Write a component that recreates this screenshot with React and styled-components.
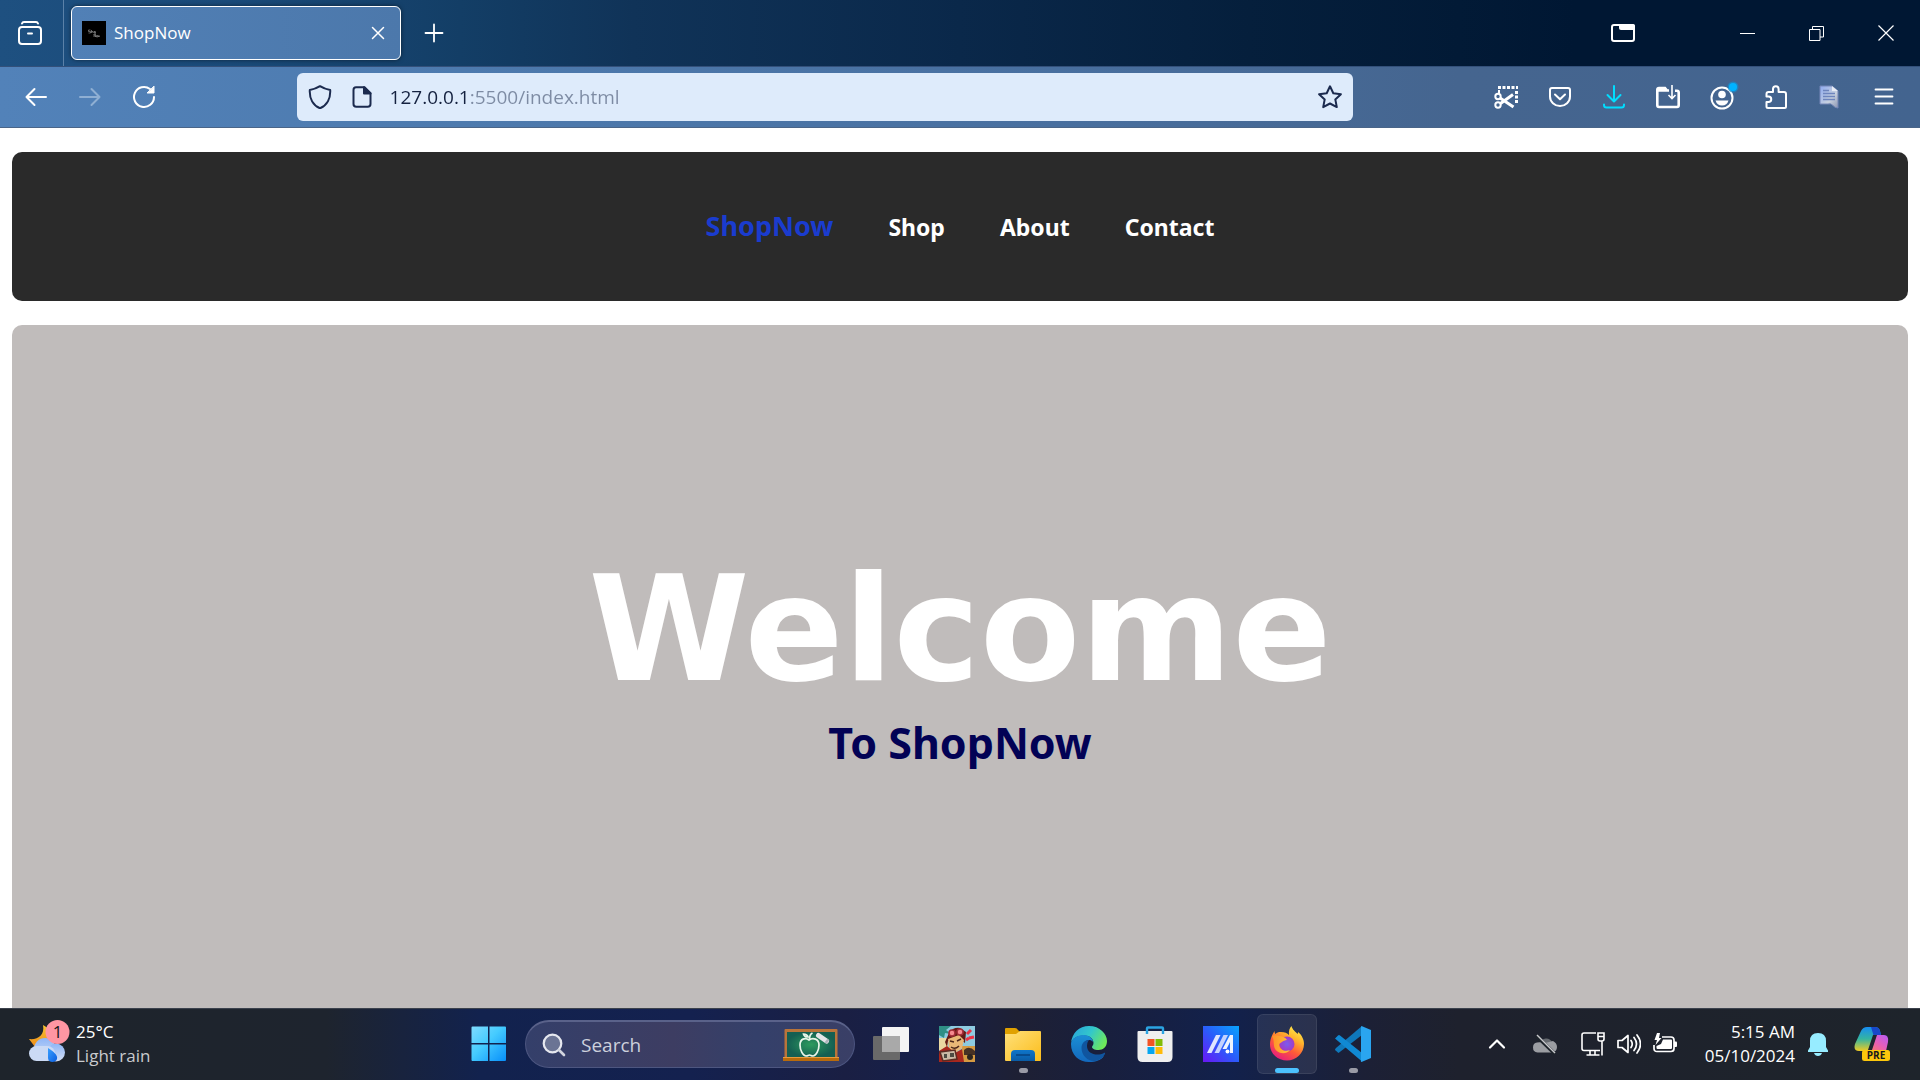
import React, { useState } from "react";
import styled, { createGlobalStyle } from "styled-components";

const UI = `"Open Sans", "Noto Sans", sans-serif`;
const SITE = `"Noto Sans", "Open Sans", sans-serif`;

const GlobalStyle = createGlobalStyle`
  *, *::before, *::after { box-sizing: border-box; }
  html, body { margin: 0; padding: 0; overflow: hidden; background: #fff; }
  svg { display: block; flex: none; }
  button { border: 0; padding: 0; margin: 0; background: none; color: inherit; font: inherit; cursor: pointer; }
  input { border: 0; padding: 0; margin: 0; outline: 0; background: none; font: inherit; }
`;

const Desktop = styled.div`
  height: 100vh;
  display: flex;
  flex-direction: column;
  font-family: ${UI};
  color: #fff;
`;

/* ---------- browser chrome ---------- */

const TabStrip = styled.header`
  flex: none;
  height: 67px;
  display: flex;
  align-items: center;
  border-bottom: 1px solid #33507a;
  background: linear-gradient(90deg, #1e5080 0%, #1a4a79 12%, #133e66 24%, #103358 33%, #0a284a 50%, #051f3c 65%, #021a36 76%, #001733 82%);
`;

const IconButton = styled.button`
  width: ${(p) => p.$width || 54}px;
  height: ${(p) => p.$height || 48}px;
  display: flex;
  align-items: center;
  justify-content: center;
  color: ${(p) => p.$color || "inherit"};
  flex: none;
`;

const OverviewCell = styled.div`
  align-self: stretch;
  width: 64px;
  display: flex;
  align-items: center;
  padding-left: 3px;
  border-right: 1px solid #5b81a8;
  margin-right: 7px;
`;

const Tab = styled.div`
  width: 330px;
  height: 54px;
  display: flex;
  align-items: center;
  padding: 0 6px 0 10px;
  border: 1px solid #fff;
  border-radius: 6px;
  background: linear-gradient(90deg, #5180b6, #4c78ab);
  box-shadow: 0 0 4px rgba(0, 0, 0, 0.5);
`;

const TabTitle = styled.span`
  flex: 1;
  margin-left: 8px;
  font-size: 17px;
  line-height: 24px;
`;

const Spacer = styled.div`
  flex: 1;
`;

const WindowControls = styled.div`
  display: flex;
  margin-left: 56px;
`;

const Toolbar = styled.div`
  flex: none;
  height: 61px;
  display: flex;
  align-items: center;
  padding: 0 9px;
  border-bottom: 1px solid #4a6588;
  background: linear-gradient(90deg, #5282b9 0%, #4d7aae 24%, #486f9f 55%, #45658f 76%, #43648f 100%);
`;

const ToolGroup = styled.div`
  display: flex;
`;

const UrlBar = styled.div`
  flex: 8.4 1 0;
  height: 48px;
  display: flex;
  align-items: center;
  padding: 0 0 0 2px;
  border-radius: 6px;
  background: #deebfb;
  color: #1b2a4e;
`;

const UrlInput = styled.input`
  flex: 1;
  min-width: 0;
  height: 32px;
  margin-left: 7px;
  font-size: 19px;
  line-height: 32px;
  color: #14213f;
  background: linear-gradient(90deg, #14213f 77px, #7d8ba3 77px);
  -webkit-background-clip: text;
  background-clip: text;
  -webkit-text-fill-color: transparent;
  caret-color: #14213f;
`;

/* ---------- page ---------- */

const Page = styled.main`
  flex: 1;
  min-height: 0;
  overflow: hidden;
  padding: 24px 12px 0;
  background: #fff;
  font-family: ${SITE};
`;

const Nav = styled.nav`
  display: flex;
  justify-content: center;
  align-items: baseline;
  gap: 55px;
  padding: 54px 24px;
  border-radius: 10px;
  background: #2a2a2a;
`;

const NavLink = styled.a`
  font-size: ${(p) => (p.$brand ? 27 : 23)}px;
  line-height: 40px;
  font-weight: 700;
  text-decoration: none;
  color: ${(p) => (p.$brand ? "#1a3ccf" : "#fff")};
`;

const Hero = styled.section`
  height: 80vh;
  margin-top: 24px;
  padding-top: 220px;
  border-radius: 10px;
  background: #c0bcbb;
  text-align: center;
`;

const HeroTitle = styled.h1`
  margin: 0;
  font-family: "DejaVu Sans", sans-serif;
  font-size: 146px;
  line-height: 168px;
  font-weight: 700;
  color: #fff;
`;

const HeroSubtitle = styled.h2`
  margin: 0;
  font-size: 43px;
  line-height: 60px;
  font-weight: 700;
  color: #020255;
`;

/* ---------- taskbar ---------- */

const Taskbar = styled.footer`
  flex: none;
  height: 72px;
  display: grid;
  grid-template-columns: 459fr auto 537fr;
  align-items: center;
  padding-bottom: 1px;
  border-top: 1px solid #3b414c;
  background: linear-gradient(90deg, #1e242b 0%, #1e242e 17%, #12224e 25%, #14214f 36%, #1a1f43 44%, #16204a 48%, #1e2034 53%, #191f3c 57%, #12214c 64%, #1c2036 71%, #1e212d 76%, #1e242b 100%);
`;

const Weather = styled.button`
  justify-self: start;
  display: flex;
  align-items: center;
  gap: 6px;
  margin-left: 28px;
  text-align: left;
`;

const TextLine = styled.span`
  display: block;
  font-size: 17px;
  line-height: 24px;
  color: ${(p) => (p.$muted ? "#c9cbce" : "#fff")};
`;

const Apps = styled.div`
  display: flex;
  align-items: center;
  gap: 6px;
`;

const AppButton = styled.button`
  width: 60px;
  height: 60px;
  display: flex;
  flex-direction: column;
  align-items: center;
  justify-content: space-between;
  padding: 12px 0 1px;
  border-radius: 6px;
  background: ${(p) => (p.$active ? "rgba(255,255,255,0.08)" : "none")};
  box-shadow: ${(p) => (p.$active ? "inset 0 0 0 1px rgba(255,255,255,0.08)" : "none")};
`;

const Indicator = styled.span`
  height: 5px;
  width: ${(p) => (p.$state === "active" ? 24 : 9)}px;
  border-radius: 3px;
  background: ${(p) => ({ active: "#4cc2ff", open: "#9a9ba6" })[p.$state] || "transparent"};
`;

const SearchBox = styled.label`
  width: 330px;
  height: 48px;
  display: flex;
  align-items: center;
  padding: 0 15px 0 16px;
  border-radius: 24px;
  border: 1px solid #4d5680;
  border-top: 2px solid #5a628a;
  background: linear-gradient(90deg, #343f6a, #3d3d62 45%, #34406a 70%, #3a3f66);
`;

const SearchInput = styled.input`
  flex: 1;
  min-width: 0;
  margin-left: 15px;
  font-size: 19px;
  line-height: 28px;
  color: #fff;
  &::placeholder { color: #ccd0dc; opacity: 1; }
`;

const Tray = styled.div`
  justify-self: end;
  display: flex;
  align-items: center;
  padding-right: 12px;
`;

const Clock = styled.button`
  text-align: right;
  margin: 0 5px 0 16px;
`;

/* ---------- icons ---------- */

const Line = ({ size = 24, w = 2, children, ...rest }) => (
  <svg width={size} height={size} viewBox="0 0 24 24" fill="none" stroke="currentColor" strokeWidth={w} strokeLinecap="round" strokeLinejoin="round" {...rest}>
    {children}
  </svg>
);

const OverviewIcon = () => (
  <Line><path d="M4 2.500C4.400 1.300 5 1 6 1h12c1 0 1.600.3 2 1.500" /><rect x="1" y="6" width="22" height="17" rx="3" /><path d="M10 12.500h4" /></Line>
);
const Favicon = () => (
  <svg width="24" height="24" viewBox="0 0 24 24"><rect width="24" height="24" fill="#000" />
    <g stroke="#8d8d8d" strokeWidth=".7" fill="none"><path d="M8.500 9h-2v1.500h2V12h-2M9.500 9v3M9.500 10.500h1.500V12M12 10.500h1.200V12H12zM13.200 13v-2.500" /><path d="M12 16v-3l1.500 3v-3M14.500 14.500h1.200V16h-1.200zM16 14.500l.5 1.500.5-1.500.5 1.500" /></g>
  </svg>
);
const CloseIcon = ({ w = 1.5, size = 24 }) => <Line size={size} w={w}><path d="M6.500 6.500l11 11M17.500 6.500l-11 11" /></Line>;
const PlusIcon = () => <Line w={1.8}><path d="M12 3.500v17M3.500 12h17" /></Line>;
const FolderTabIcon = () => (
  <svg width="24" height="24" viewBox="0 0 24 24"><rect x="1" y="4" width="22" height="16" rx="2" fill="none" stroke="#fff" strokeWidth="2" /><path d="M8 3h14q2 0 2 2v4H10q-2 0-2-2z" fill="#fff" /></svg>
);
const MinimizeIcon = () => <svg width="15" height="15" viewBox="0 0 15 15"><path d="M0 7.500h15" stroke="#fff" /></svg>;
const RestoreIcon = () => <svg width="15" height="15" viewBox="0 0 15 15" fill="none" stroke="#fff"><path d="M.5 3.500h10.500v11H.5zM3.500 3.500v-3h11v10.500H11" /></svg>;
const WinCloseIcon = () => <svg width="16" height="16" viewBox="0 0 16 16" stroke="#fff" strokeWidth="1.200"><path d="M.5.5l15 15M15.500.5l-15 15" /></svg>;
const BackIcon = () => <Line><path d="M22 12H2.500M10.500 4l-8 8 8 8" /></Line>;
const ForwardIcon = () => <Line><path d="M2 12h19.500M13.500 4l8 8-8 8" /></Line>;
const ReloadIcon = () => (
  <Line><path d="M22 12A10 10 0 1 1 18 4" /><path d="M22 1.500V8h-6.500z" fill="currentColor" strokeWidth="1" /></Line>
);
const ShieldIcon = () => <Line><path d="M12 1.200c3.600 2.300 6.400 3.200 10.200 3.800.5 8.500-3.200 15.500-10.200 18.300C5 20.500 1.300 13.500 1.800 5 5.600 4.400 8.400 3.500 12 1.200z" /></Line>;
const PageIcon = () => (
  <Line><path d="M6 2.200h8.500l6 6V19q0 2.800-2.800 2.800H6.300Q3.500 21.800 3.500 19V4.900Q3.500 2.200 6 2.200z" /><path d="M14 2.200v6.300h6.500z" fill="currentColor" /></Line>
);
const StarIcon = () => <Line><path d="M12 1.300l3.300 6.900 7.600 1-5.600 5.200 1.500 7.700L12 18.500l-6.800 3.600 1.500-7.700L1.100 9.200l7.600-1z" /></Line>;
const ScissorsIcon = () => (
  <svg width="24" height="24" viewBox="0 0 24 24" fill="none" stroke="#fff">
    <path d="M4 2.500h20M22.500 6v13" strokeWidth="3" strokeDasharray="3 1.500" /><path d="M5 5v4" strokeWidth="2" />
    <circle cx="4" cy="11.500" r="2.700" strokeWidth="2" /><circle cx="4" cy="20" r="2.700" strokeWidth="2" />
    <path d="M6 13l13.500 9M6.500 18.500L19 9.500" strokeWidth="3" />
  </svg>
);
const PocketIcon = () => <Line><path d="M4 3h16q2 0 2 2v6.500a10 9.500 0 0 1-20 0V5q0-2 2-2z" /><path d="M7 9.500l5 4.700 5-4.700" /></Line>;
const DownloadIcon = () => <Line><path d="M12 1v15M5.500 10l6.500 6.500 6.500-6.500M2 19.500v.5q0 2.500 2.500 2.500h15Q22 22.500 22 20v-.5" /></Line>;
const SaveFolderIcon = () => (
  <svg width="24" height="24" viewBox="0 0 24 24" fill="none" stroke="#fff"><path d="M11 5.500L9 3H3Q1.300 3 1.300 4.700v15.600Q1.300 22 3 22h18q1.700 0 1.700-1.700V7.500q0-1.700-1.700-1.700h-2M2 5.500h11" strokeWidth="2.600" /><path d="M16 0v13M12.500 10l3.500 3.500 3.500-3.500" strokeWidth="1.600" /></svg>
);
const AccountIcon = () => (
  <svg width="34" height="34" viewBox="0 0 34 34"><circle cx="17" cy="18" r="10.500" fill="none" stroke="#fff" strokeWidth="2" /><circle cx="17" cy="14.500" r="3.800" fill="#fff" /><path d="M10.500 20.500h13q-1.500 5-6.500 5t-6.500-5z" fill="#fff" /><circle cx="28" cy="7" r="5.500" fill="#168fce" opacity=".7" /><circle cx="28" cy="7" r="4" fill="#00b3ff" /></svg>
);
const PuzzleIcon = () => (
  <Line><path d="M4 23q-1.500 0-1.500-1.500V17H4.500a2.700 2.700 0 0 0 0-5.500h-2V9q0-2 2-2H9V4a2.800 2.800 0 0 1 5.600 0v3H20q2 0 2 2v12.500Q22 23 20.500 23z" /></Line>
);
const DocIcon = () => (
  <svg width="24" height="24" viewBox="0 0 24 24"><defs><linearGradient id="doc" x2="1" y2="1"><stop stopColor="#8eaaf0" /><stop offset=".6" stopColor="#c8d1df" /><stop offset="1" stopColor="#8b95b0" /></linearGradient></defs><path d="M2 1h12l6 5v17q-3 0-5-2.500t-5-1.500H2z" fill="url(#doc)" stroke="#7486b7" /><path d="M14 1v5h6z" fill="#e8edf6" /><path d="M5 5.500h6M5 8.500h12M5 11.500h12M5 14.500h12" stroke="#6e85bd" strokeWidth="1.300" /></svg>
);
const MenuIcon = () => <Line w={1.8}><path d="M3.500 4.500h17M3.500 11.500h17M3.500 18.500h17" /></Line>;

const WeatherIcon = () => (
  <svg width="42" height="48" viewBox="0 0 42 48">
    <defs><linearGradient id="moon" x2="0" y2="1"><stop stopColor="#f5c431" /><stop offset="1" stopColor="#f08a18" /></linearGradient><linearGradient id="cloud" x2="0" y2="1"><stop stopColor="#8fb6f7" /><stop offset="1" stopColor="#d5e0f5" /></linearGradient><linearGradient id="drop" x2="1" y2="1"><stop stopColor="#3aa0ff" /><stop offset="1" stopColor="#0a5de0" /></linearGradient></defs>
    <path d="M15 5c8 4 12 11 9 17s-11 8-17 5l-6-8c9 1 16-4 14-14z" fill="url(#moon)" />
    <circle cx="17" cy="29" r="11" fill="url(#cloud)" /><circle cx="28" cy="32.500" r="9" fill="url(#cloud)" /><rect x="1" y="26" width="26" height="15" rx="7.500" fill="#cbdaf5" />
    <path d="M20 28c5 3 10 7 9 11-1 4-9 4-9-1z" fill="url(#drop)" />
    <circle cx="29.500" cy="12" r="12" fill="#ff96a3" /><text x="29.500" y="18" textAnchor="middle" fontSize="17" fontFamily="Open Sans, sans-serif" fill="#15171a">1</text>
  </svg>
);
const StartIcon = () => (
  <svg width="36" height="36" viewBox="0 0 36 36"><defs><linearGradient id="win" x2="1" y2="1"><stop stopColor="#7fdcff" /><stop offset=".45" stopColor="#45cbff" /><stop offset="1" stopColor="#078ffa" /></linearGradient></defs><path d="M1.500.5H17v16.500H.500V1.500q0-1 1-1zM18.500.5H34q1 0 1 1V17H18.500zM.500 18.500H17V35H1.500q-1 0-1-1zM18.500 18.500H35V34q0 1-1 1H18.500z" fill="url(#win)" /></svg>
);
const SearchGlass = () => <svg width="24" height="24" viewBox="0 0 24 24"><circle cx="10.500" cy="10.500" r="8.800" fill="#6b7494" stroke="#e6e8ef" strokeWidth="2.200" /><path d="M17 17l5 5" stroke="#d2d5de" strokeWidth="2.600" strokeLinecap="round" /></svg>;
const BoardIcon = () => (
  <svg width="56" height="34" viewBox="0 0 56 34"><defs><radialGradient id="board"><stop stopColor="#2c9b5e" /><stop offset="1" stopColor="#155f52" /></radialGradient></defs><rect x="1.500" y="1" width="53" height="29" rx="1" fill="#b9743a" /><rect x="4" y="4" width="48" height="25" fill="url(#board)" /><rect y="29" width="56" height="4" fill="#b86b0c" /><path d="M0 29.500h56" stroke="#e79a3c" />
    <path d="M26 12c-4-3-9-1-9 5 0 5 3 11 6 11 2 0 2-1 3.500-1s1.500 1 3.500 1c3 0 6-6 6-11 0-6-6-8-10-5zM26.500 11c0-3 1-5 3-6M25 9c-3 0-4-1-4.500-3 3 0 4 1 4.500 3z" fill="none" stroke="#e9f6ea" strokeWidth="1.700" /><path d="M35.500 7.500l8 5.500" stroke="#e5e5e8" strokeWidth="5" strokeLinecap="round" /><path d="M43 12.500l2 1.500" stroke="#aeb3bb" strokeWidth="4.500" /></svg>
);
const TaskViewIcon = () => (
  <svg width="36" height="36" viewBox="0 0 36 36"><rect x="9" y="1" width="27" height="25" rx="1" fill="#f4f4f4" /><rect y="10" width="27" height="24" rx="1" fill="#696969" /><rect x="9" y="10" width="18" height="16" fill="#a9a9a9" /></svg>
);
const GameIcon = () => (
  <svg width="36" height="36" viewBox="0 0 36 36">
    <rect width="36" height="36" fill="#8ecbe0" /><path d="M0 0h12L7 4l5 4-6-1-1 5-5-3z" fill="#2f8f86" /><path d="M0 12h9v12H0z" fill="#ead9a2" />
    <path d="M23 20h13v16H23z" fill="#d59a42" /><path d="M25 24q5-5 11 1v4H25z" fill="#473124" /><circle cx="31" cy="31" r="3" fill="#2d2521" />
    <path d="M10 7Q14 1 21 2l6 4-1 11-4-3-13 1-1 6-2-5z" fill="#641c16" />
    <path d="M9 13l11-4 5 5-2 8-7 5-6-4z" fill="#e9b877" /><path d="M11 15l4 1M18 15l4-2M12 21q4 3 8-1" stroke="#4b261b" strokeWidth="1.500" fill="none" />
    <circle cx="13" cy="7" r="3" fill="#f58a90" stroke="#a32d38" strokeWidth="1.500" /><circle cx="21" cy="6" r="3" fill="#f58a90" stroke="#a32d38" strokeWidth="1.500" />
    <path d="M0 25l8-5 8 7 7-4 2 13H0z" fill="#a8271e" /><path d="M1 26l15-2 2 9-14 2z" fill="#c9b9a4" stroke="#5b2b22" strokeWidth="1.500" /><path d="M5 28h3v4H5zM11 27h4v4h-4z" fill="#4c4b42" />
    <path d="M28 8l4-4M30 12l5-1M27 14l3-2" stroke="#ec3345" strokeWidth="3" />
  </svg>
);
const ExplorerIcon = () => (
  <svg width="36" height="36" viewBox="0 0 36 36"><defs><linearGradient id="fold" x2="1" y2="1"><stop stopColor="#ffe07a" /><stop offset="1" stopColor="#fbbd1b" /></linearGradient><linearGradient id="tray" x2="0" y2="1"><stop stopColor="#0f76ca" /><stop offset="1" stopColor="#0a5ba5" /></linearGradient></defs><path d="M0 3q0-1 1-1h9q2 0 3 2l2 2v6H0z" fill="#e0a100" /><path d="M0 8h11l4-3h20q1 0 1 1v28q0 1-1 1H1q-1 0-1-1z" fill="url(#fold)" /><path d="M6 28q0-4 4-4h16q4 0 4 4v7H6z" fill="url(#tray)" /><path d="M11 29h14" stroke="#07427f" strokeWidth="1.500" /></svg>
);
const EdgeIcon = () => (
  <svg width="36" height="36" viewBox="0 0 36 36"><defs><linearGradient id="eg" x1="0" x2="1" y1=".2" y2=".6"><stop stopColor="#28a6dc" /><stop offset=".5" stopColor="#33c7cb" /><stop offset="1" stopColor="#6fea58" /></linearGradient><linearGradient id="eb" x2="0" y2="1"><stop stopColor="#1b8fd5" /><stop offset="1" stopColor="#1368bd" /></linearGradient></defs>
    <path d="M0 17C1 7 8 0 18 0c11 0 18 8 18 15 0 6-4 9-8.500 9C23 24 21 22.500 21 21c0-1 1.500-1.500 1.500-4C22.500 13 19 9.500 13 9.500 6 9.500 1 13 0 17z" fill="url(#eg)" /><path d="M0 18c0-5 6-9 12.500-9S22 13 22 16c-1-1.500-2.500-2-4-2-4 0-6 4-6 7 0 8 8 12 15 11 2 0 4-1 6-2-3 4-8 6-15 6C8 36 0 29 0 18z" fill="url(#eb)" /><path d="M18 14c-5 0-7.500 4-7.500 8C10.500 30 18 36 24 35c5-1 8-3.500 10-7 .5-1-.5-1.500-1-1-7 3.500-17 1-17-7 0-3 1-5 2-6z" fill="#10559f" /></svg>
);
const StoreIcon = () => (
  <svg width="36" height="36" viewBox="0 0 36 36"><path d="M10 8V2.500q0-1 1-1h14q1 0 1 1V8" fill="none" stroke="#2ba4e2" strokeWidth="2.400" /><path d="M.5 6q0-1 1-1h33q1 0 1 1v25q0 5-5 5h-25q-5 0-5-5z" fill="#efefef" /><path d="M10 5v3M26 5v3" stroke="#2ba4e2" strokeWidth="2.400" /><path d="M10.500 13h7v7h-7z" fill="#f35325" /><path d="M18.500 13h7v7h-7z" fill="#81bc06" /><path d="M10.500 21h7v7h-7z" fill="#05a6f0" /><path d="M18.500 21h7v7h-7z" fill="#ffba08" /></svg>
);
const AsusIcon = () => (
  <svg width="36" height="36" viewBox="0 0 36 36"><defs><linearGradient id="as" x1="0" y1="1" x2="1" y2="0"><stop stopColor="#6a16f5" /><stop offset=".5" stopColor="#2a5dfb" /><stop offset="1" stopColor="#08a4fc" /></linearGradient></defs><rect width="36" height="36" fill="url(#as)" /><path d="M4 27L13 9h4.500L8.500 27z" fill="#dfe6ff" /><path d="M11.500 27l9-18H25l-9 18z" fill="#c4d2ff" /><path d="M19.500 23L27 9h3v18h-3V16l-3.500 7z" fill="#eef3ff" /><circle cx="24.500" cy="25.500" r="2" fill="#fff" /></svg>
);
const FirefoxIcon = () => (
  <svg width="36" height="36" viewBox="0 0 36 36"><defs><linearGradient id="ff" x1=".8" y1="0" x2=".2" y2="1"><stop stopColor="#fff04f" /><stop offset=".3" stopColor="#ffb52c" /><stop offset=".6" stopColor="#ff5b37" /><stop offset="1" stopColor="#e31587" /></linearGradient><radialGradient id="fp"><stop stopColor="#7a5cf0" /><stop offset="1" stopColor="#a23bc4" /></radialGradient><linearGradient id="fe"><stop stopColor="#ff9028" /><stop offset="1" stopColor="#ffc239" /></linearGradient></defs>
    <path d="M22.500 0c1 4 4 5.500 6 8 .5-.5.500-1.500.500-2 4 3 6 8 6 12 0 9-8 16.500-17 16.500S1 28 1 18.500C1 13 3 9 5.500 5c0 1.500.5 2.500 1 3C8 6.500 9 6 12 6c4 0 6 1 8 3-.5-4 .5-7 2.500-9z" fill="url(#ff)" /><circle cx="18" cy="18" r="7.500" fill="url(#fp)" /><path d="M3 10c2-1 5-1 7 0 3 0 6 1 8 4-2 0-4 1-5 2s-3 1-3 3c1 5 6 7 11 5-5 6-15 3-16-4-.4-4 0-7-2-10z" fill="url(#fe)" /></svg>
);
const CodeIcon = () => (
  <svg width="36" height="36" viewBox="0 0 36 36"><path d="M0 24l3.500 3L27 9V0L1 22q-1 1-1 2z" fill="#0f78bb" /><path d="M0 12.500L3 9.500q1-1 2 0L27 27v8.500z" fill="#1089d3" /><path d="M26.500 0L36 4v28l-9.500 4q-1 0-.5-2V2q0-1.500.5-2z" fill="#2aa5f0" /></svg>
);

const ChevronIcon = () => <Line w={2.200}><path d="M5 15.500L12 8.500l7 7" /></Line>;
const CloudOffIcon = () => (
  <svg width="26" height="24" viewBox="0 0 26 24"><path d="M8 11a6.500 6.500 0 0 1 12-1l-6 6z" fill="#666a70" /><path d="M5 10.500q4-1 6 1l10-2.500q4 2 4 6t-4 5.500H5.500Q1 20 1 15.500t4-5z" fill="#9b9da2" /><path d="M4.500 4l18.500 18" stroke="#1e242b" strokeWidth="3.500" /><path d="M5 3l18 18" stroke="#c9cacd" strokeWidth="1.500" /></svg>
);
const NetworkIcon = () => (
  <svg width="24" height="24" viewBox="0 0 24 24" fill="none" stroke="#fff" strokeWidth="1.600"><path d="M15 1H3Q1 1 1 3v13.500q0 2 2 2h16M9 18.500v4M14 18.500v4M5.500 23h13M17 1h6v6q0 2-2 2h-2q-2 0-2-2zM17 4.500h6M21 9v14.500" /></svg>
);
const VolumeIcon = () => <Line w={1.700}><path d="M1 8.500h4L11 3.500v17L5 15.500H1zM14 8.500q2.500 3.500 0 7M17 5.500q5 6.500 0 13M20 3q7 9 0 18" /></Line>;
const BatteryIcon = () => (
  <svg width="24" height="24" viewBox="0 0 24 24"><path d="M9 5h9q3 0 3 3v8.500q0 3-3 3H4q-3 0-3-3V13" fill="none" stroke="#fff" strokeWidth="1.700" /><path d="M10 7.500h8q1 0 1 1v7.500q0 1-1 1H4.500q-1 0-1-1V14L8 12z" fill="#fff" /><path d="M21 9.500h2q1 0 1 1V14q0 1-1 1h-2z" fill="#fff" /><path d="M4 1L1.500 8H4L2.500 13l6-7H6l1-5z" fill="#fff" /></svg>
);
const BellIcon = () => <svg width="24" height="24" viewBox="0 0 24 24"><path d="M12 1q8 0 8 8v6l2 3.500V20H2v-1.500L4 15V9q0-8 8-8zM8 21h8q-1 3-4 3t-4-3z" fill="#97ecff" /></svg>;
const CopilotIcon = () => (
  <svg width="36" height="36" viewBox="0 0 36 36"><defs><linearGradient id="c1" x2="0" y2="1"><stop stopColor="#178df2" /><stop offset=".5" stopColor="#35b5a0" /><stop offset="1" stopColor="#f1cb22" /></linearGradient><linearGradient id="c2" x1="1" y1="0" x2="0" y2="1"><stop stopColor="#b65cf8" /><stop offset=".5" stopColor="#e95fb5" /><stop offset="1" stopColor="#ff8155" /></linearGradient></defs><path d="M7 5q2-4 6-4h8q4 0 5 4l1 4h-3q-4 0-5 4l-3 9q-1 3-4 3H5q-6 0-4-7z" fill="url(#c1)" /><path d="M17 1h4q4 0 5 4l1 4h-3q-3 0-4 2z" fill="#1848c9" /><path d="M22 9h8q5 0 4 7l-2 9H12q3 0 4-4l3-8q1-4 3-4z" fill="url(#c2)" /><path d="M19 9h4l-5 15h-4z" fill="#20242e" /><rect x="8" y="24" width="28" height="11" rx="2.500" fill="#fcc70c" /><text x="22" y="33" textAnchor="middle" fontSize="10" fontWeight="700" fontFamily="Open Sans, sans-serif" fill="#17191c">PRE</text></svg>
);

const TOOLS = [
  ["Screenshot", ScissorsIcon],
  ["Save to Pocket", PocketIcon],
  ["Downloads", DownloadIcon, "#00ddff"],
  ["Save folder", SaveFolderIcon],
  ["Account", AccountIcon],
  ["Extensions", PuzzleIcon],
  ["Reader notes", DocIcon],
  ["Open menu", MenuIcon],
];

const APPS = [
  ["Task view", TaskViewIcon],
  ["Game", GameIcon],
  ["File Explorer", ExplorerIcon, "open"],
  ["Edge", EdgeIcon],
  ["Store", StoreIcon],
  ["MyASUS", AsusIcon],
  ["Firefox", FirefoxIcon, "active"],
  ["Code", CodeIcon, "open"],
];

export default function App() {
  const [url, setUrl] = useState("127.0.0.1:5500/index.html");
  return (
    <Desktop>
      <GlobalStyle />
      <TabStrip>
        <OverviewCell><IconButton aria-label="Firefox View"><OverviewIcon /></IconButton></OverviewCell>
        <Tab>
          <Favicon />
          <TabTitle>ShopNow</TabTitle>
          <IconButton $width={32} $height={32} aria-label="Close tab"><CloseIcon /></IconButton>
        </Tab>
        <IconButton $width={66} aria-label="New tab"><PlusIcon /></IconButton>
        <Spacer />
        <IconButton $width={68} aria-label="List tabs"><FolderTabIcon /></IconButton>
        <WindowControls>
          <IconButton $width={69} aria-label="Minimize"><MinimizeIcon /></IconButton>
          <IconButton $width={69} aria-label="Restore"><RestoreIcon /></IconButton>
          <IconButton $width={69} aria-label="Close"><WinCloseIcon /></IconButton>
        </WindowControls>
      </TabStrip>
      <Toolbar>
        <ToolGroup>
          <IconButton aria-label="Back"><BackIcon /></IconButton>
          <IconButton aria-label="Forward" $color="#8fafd3"><ForwardIcon /></IconButton>
          <IconButton aria-label="Reload"><ReloadIcon /></IconButton>
        </ToolGroup>
        <Spacer />
        <UrlBar>
          <IconButton $width={42} aria-label="Tracking protection"><ShieldIcon /></IconButton>
          <IconButton $width={42} aria-label="Site information"><PageIcon /></IconButton>
          <UrlInput aria-label="Address" value={url} onChange={(e) => setUrl(e.target.value)} spellCheck={false} />
          <IconButton $width={46} aria-label="Bookmark"><StarIcon /></IconButton>
        </UrlBar>
        <Spacer />
        <ToolGroup>
          {TOOLS.map(([name, Icon, color]) => (
            <IconButton key={name} aria-label={name} $color={color}><Icon /></IconButton>
          ))}
        </ToolGroup>
      </Toolbar>
      <Page>
        <Nav>
          <NavLink href="#" $brand>ShopNow</NavLink>
          <NavLink href="#shop">Shop</NavLink>
          <NavLink href="#about">About</NavLink>
          <NavLink href="#contact">Contact</NavLink>
        </Nav>
        <Hero>
          <HeroTitle>Welcome</HeroTitle>
          <HeroSubtitle>To ShopNow</HeroSubtitle>
        </Hero>
      </Page>
      <Taskbar>
        <Weather>
          <WeatherIcon />
          <span>
            <TextLine>25°C</TextLine>
            <TextLine $muted>Light rain</TextLine>
          </span>
        </Weather>
        <Apps>
          <AppButton aria-label="Start"><StartIcon /><Indicator /></AppButton>
          <SearchBox>
            <SearchGlass />
            <SearchInput type="text" placeholder="Search" aria-label="Search" />
            <BoardIcon />
          </SearchBox>
          {APPS.map(([name, Icon, state]) => (
            <AppButton key={name} aria-label={name} $active={state === "active"}>
              <Icon />
              <Indicator $state={state} />
            </AppButton>
          ))}
        </Apps>
        <Tray>
          <IconButton $width={48} aria-label="Show hidden icons"><ChevronIcon /></IconButton>
          <IconButton $width={48} aria-label="OneDrive"><CloudOffIcon /></IconButton>
          <IconButton $width={48} aria-label="Network"><NetworkIcon /></IconButton>
          <IconButton $width={24} aria-label="Volume"><VolumeIcon /></IconButton>
          <IconButton $width={48} aria-label="Battery"><BatteryIcon /></IconButton>
          <Clock>
            <TextLine>5:15 AM</TextLine>
            <TextLine>05/10/2024</TextLine>
          </Clock>
          <IconButton $width={36} aria-label="Notifications"><BellIcon /></IconButton>
          <IconButton $width={72} aria-label="Copilot"><CopilotIcon /></IconButton>
        </Tray>
      </Taskbar>
    </Desktop>
  );
}
